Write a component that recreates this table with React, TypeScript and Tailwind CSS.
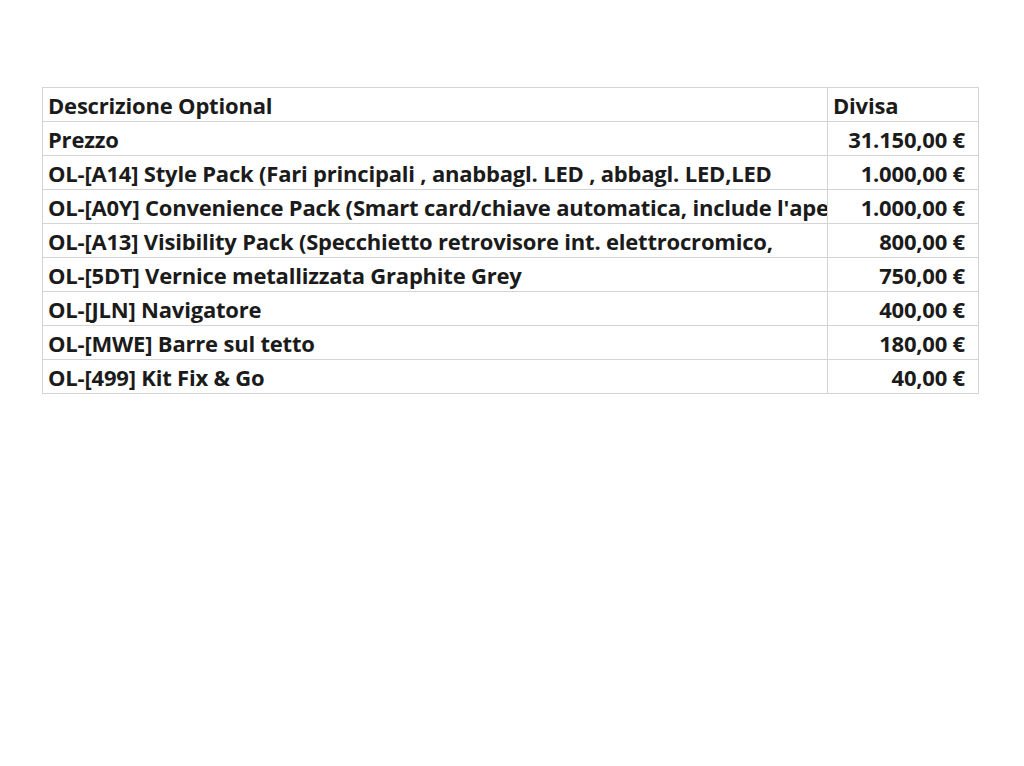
const ROWS: { desc: string; price: string }[] = [
  { desc: 'Prezzo', price: '31.150,00 €' },
  { desc: 'OL-[A14] Style Pack (Fari principali , anabbagl. LED , abbagl. LED,LED', price: '1.000,00 €' },
  { desc: "OL-[A0Y] Convenience Pack (Smart card/chiave automatica, include l'apertura", price: '1.000,00 €' },
  { desc: 'OL-[A13] Visibility Pack (Specchietto retrovisore int. elettrocromico,', price: '800,00 €' },
  { desc: 'OL-[5DT] Vernice metallizzata Graphite Grey', price: '750,00 €' },
  { desc: 'OL-[JLN] Navigatore', price: '400,00 €' },
  { desc: 'OL-[MWE] Barre sul tetto', price: '180,00 €' },
  { desc: 'OL-[499] Kit Fix & Go', price: '40,00 €' },
];

export default function App() {
  return (
    <div className="h-[766px] w-[1024px] bg-white pl-[42px] pt-[87px] font-['Open_Sans',sans-serif] text-[#1b1b1b]">
      <table className="w-[936px] table-fixed border-collapse text-[22px] font-bold tracking-[-0.2px]">
        <colgroup>
          <col className="w-[785px]" />
          <col className="w-[151px]" />
        </colgroup>
        <thead>
          <tr className="h-[34px]">
            <th className="border border-[#d4d4d4] px-[5px] text-left font-bold leading-[32px]">Descrizione Optional</th>
            <th className="border border-[#d4d4d4] px-[5px] text-left font-bold leading-[32px]">Divisa</th>
          </tr>
        </thead>
        <tbody>
          {ROWS.map((r) => (
            <tr key={r.desc} className="h-[34px]">
              <td className="overflow-hidden whitespace-nowrap border border-[#d4d4d4] px-[5px] leading-[32px]">{r.desc}</td>
              <td className="whitespace-nowrap border border-[#d4d4d4] px-[13px] text-right leading-[32px]">{r.price}</td>
            </tr>
          ))}
        </tbody>
      </table>
    </div>
  );
}
